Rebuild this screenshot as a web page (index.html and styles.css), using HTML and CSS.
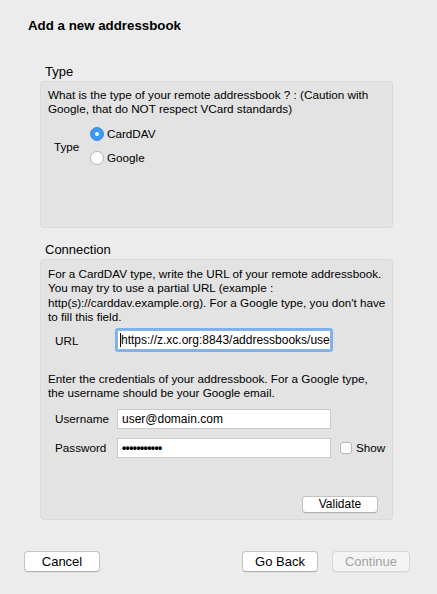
FILE: index.html
```html
<!DOCTYPE html>
<html>
<head>
<meta charset="utf-8">
<link rel="stylesheet" href="styles.css">
</head>
<body>
<div class="dialog">
  <h1 class="title">Add a new addressbook</h1>

  <section class="group group-type">
    <h2 class="group-title">Type</h2>
    <div class="box box-type">
      <p class="desc">What is the type of your remote addressbook ? : (Caution with Google, that do NOT respect VCard standards)</p>
      <div class="type-row">
        <span class="row-label">Type</span>
        <div class="radios">
          <label class="radio-item"><span class="radio checked"></span>CardDAV</label>
          <label class="radio-item"><span class="radio"></span>Google</label>
        </div>
      </div>
    </div>
  </section>

  <section class="group group-conn">
    <h2 class="group-title">Connection</h2>
    <div class="box box-conn">
      <p class="desc">For a CardDAV type, write the URL of your remote addressbook. You may try to use a partial URL (example : http(s)://carddav.example.org). For a Google type, you don't have to fill this field.</p>
      <div class="field-row url-row">
        <span class="field-label">URL</span>
        <div class="input focused"><span class="caret"></span>https://z.xc.org:8843/addressbooks/user</div>
      </div>
      <p class="desc cred">Enter the credentials of your addressbook. For a Google type, the username should be your Google email.</p>
      <div class="field-row">
        <span class="field-label">Username</span>
        <div class="input">user@domain.com</div>
      </div>
      <div class="field-row pass-row">
        <span class="field-label">Password</span>
        <div class="input dots">•••••••••••</div>
        <label class="check-item"><span class="checkbox"></span>Show</label>
      </div>
      <div class="validate-row">
        <button class="btn btn-small">Validate</button>
      </div>
    </div>
  </section>

  <div class="footer">
    <button class="btn">Cancel</button>
    <div class="footer-right">
      <button class="btn">Go Back</button>
      <button class="btn disabled">Continue</button>
    </div>
  </div>
</div>
</body>
</html>
```

FILE: styles.css
```css
* { box-sizing: border-box; }
html, body {
  margin: 0;
  padding: 0;
  background: #ececec;
}
body {
  font-family: "Liberation Sans", Arial, sans-serif;
  font-size: 11.7px;
  color: #000;
  width: 437px;
  height: 594px;
  overflow: hidden;
}
.dialog {
  padding: 18px 0 0 0;
}
.title {
  margin: 0 0 0 28px;
  font-size: 13.3px;
  font-weight: bold;
  line-height: 16px;
  height: 16px;
}
.group {
  margin-left: 40px;
  width: 353px;
}
.group-type { margin-top: 30px; }
.group-conn { margin-top: 14px; }
.group-title {
  margin: 0 0 1px 5px;
  font-size: 13px;
  font-weight: normal;
  line-height: 16px;
  height: 16px;
}
.box {
  background: #e3e3e3;
  border: 1px solid #d9d9d9;
  border-radius: 4px;
  padding: 6px 6px 0 7px;
}
.box-type { height: 147px; }
.box-conn { height: 261px; display: flex; flex-direction: column; padding-top: 7px; }
.desc {
  margin: 0;
  line-height: 14.3px;
}
.type-row {
  display: flex;
  align-items: center;
  margin-top: 9px;
}
.row-label {
  width: 42px;
  padding-left: 6px;
  margin-top: 2px;
}
.radios {
  display: flex;
  flex-direction: column;
  gap: 8px;
}
.radio-item {
  display: flex;
  align-items: center;
  height: 16px;
}
.radio {
  width: 14px;
  height: 14px;
  border-radius: 50%;
  background: #fff;
  border: 1px solid #b5b5b5;
  margin-right: 3px;
  position: relative;
}
.radio.checked {
  background: #3d97f8;
  border-color: #3a8ee6;
}
.radio.checked::after {
  content: "";
  position: absolute;
  left: 4px;
  top: 4px;
  width: 4px;
  height: 4px;
  border-radius: 50%;
  background: #fff;
}
.field-row {
  display: flex;
  align-items: center;
}
.url-row { margin-top: 6px; margin-bottom: 22px; }
.cred + .field-row { margin-top: 8px; }
.pass-row { margin-top: 9px; }
.field-label {
  width: 69px;
  padding-left: 7px;
}
.input {
  width: 214px;
  height: 20px;
  background: #fff;
  border: 1px solid #c9c9c9;
  padding: 0 4px;
  line-height: 18px;
  white-space: nowrap;
  overflow: hidden;
  font-size: 12px;
}
.input.focused {
  border: 1px solid #8db3e6;
  box-shadow: 0 0 0 2px #7fb0ee;
  border-radius: 1px;
  padding-left: 2px;
}
.caret {
  display: inline-block;
  width: 1px;
  height: 14px;
  background: #000;
  vertical-align: -3px;
}
.dots {
  font-size: 12px;
  font-weight: bold;
  letter-spacing: -0.6px;
}
.check-item {
  display: flex;
  align-items: center;
  margin-left: 9px;
}
.checkbox {
  width: 12px;
  height: 12px;
  border: 1px solid #b5b5b5;
  border-radius: 3px;
  background: #fff;
  margin-right: 4px;
}
.validate-row {
  margin-top: auto;
  margin-bottom: 6px;
  display: flex;
  justify-content: flex-end;
  padding-right: 8px;
}
.btn {
  font-family: "Liberation Sans", Arial, sans-serif;
  font-size: 13px;
  color: #000;
  background: #fff;
  border: 1px solid #c3c3c3;
  border-bottom-color: #b0b0b0;
  border-radius: 4px;
  height: 21px;
  width: 76px;
  padding: 0;
  line-height: 19px;
  box-shadow: 0 0.5px 0.5px rgba(0,0,0,0.08);
}
.btn-small {
  height: 17px;
  width: 76px;
  font-size: 12px;
  line-height: 15px;
}
.btn.disabled {
  color: #a3a3a3;
  background: #f4f4f4;
  border-color: #d6d6d6;
  width: 78px;
}
.footer {
  display: flex;
  justify-content: space-between;
  margin: 31px 27px 0 24px;
}
.footer-right {
  display: flex;
  gap: 14px;
}
```
